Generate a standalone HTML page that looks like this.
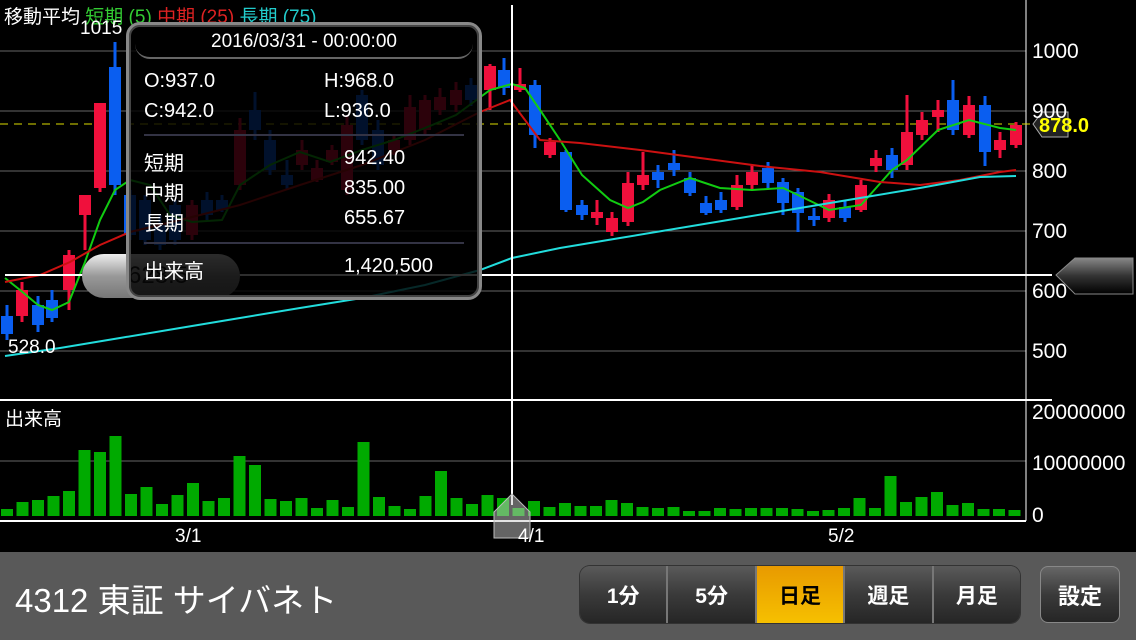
<!DOCTYPE html>
<html><head><meta charset="utf-8"><style>
body{margin:0;width:1136px;height:640px;background:#000;overflow:hidden;font-family:"Liberation Sans","Noto Sans CJK JP",sans-serif;position:relative}
.t{position:absolute;color:#fff;white-space:nowrap}
.bar{position:absolute;left:0;top:552px;width:1136px;height:88px;background:#595959}
.grp{position:absolute;left:580px;top:566px;width:440px;height:57px;border-radius:10px;background:linear-gradient(#5a5a5a,#3a3a3a 50%,#262626);display:flex;overflow:hidden;box-shadow:0 0 0 1px #333}
.grp div{flex:1;display:flex;align-items:center;justify-content:center;color:#fff;font-weight:bold;font-size:21px;border-left:2px solid #777}
.grp div:first-child{border-left:none}
.grp .on{background:linear-gradient(#e89a00,#f6c000);color:#000}
.set{position:absolute;left:1040px;top:566px;width:80px;height:57px;border-radius:8px;background:linear-gradient(#666,#3a3a3a 50%,#262626);border:1px solid #888;box-sizing:border-box;color:#fff;font-weight:bold;font-size:22px;display:flex;align-items:center;justify-content:center}
.ax{position:absolute;left:1032px;color:#fff;font-size:21px}
</style></head><body>
<svg id="s" width="1136" height="552" style="position:absolute;left:0;top:0"></svg>
<div class="t" style="left:4px;top:2px;font-size:19px">移動平均 <span style="color:#3c3">短期 (5)</span> <span style="color:#d22">中期 (25)</span> <span style="color:#2cc">長期 (75)</span></div>
<div class="t" style="left:80px;top:18px;font-size:19px">1015</div>
<div class="t" style="left:8px;top:337px;font-size:19px">528.0</div>
<div class="t" style="left:5px;top:404px;font-size:19px">出来高</div>
<div class="ax" style="top:40px">1000</div>
<div class="ax" style="top:100px">900</div>
<div class="ax" style="top:160px">800</div>
<div class="ax" style="top:220px">700</div>
<div class="ax" style="top:280px">600</div>
<div class="ax" style="top:340px">500</div>
<div class="ax" style="top:401px">20000000</div>
<div class="ax" style="top:452px">10000000</div>
<div class="ax" style="top:504px">0</div>
<div class="t" style="left:175px;top:526px;font-size:19px">3/1</div>
<div class="t" style="left:518px;top:526px;font-size:19px">4/1</div>
<div class="t" style="left:828px;top:526px;font-size:19px">5/2</div>
<div style="position:absolute;left:82px;top:254px;width:158px;height:44px;border-radius:22px;background:linear-gradient(#eee,#999 50%,#777);"></div>
<div class="t" style="left:128px;top:262px;font-size:24px;color:#222">628.5</div>
<div style="position:absolute;left:126px;top:22px;width:356px;height:278px;border-radius:14px;background:rgba(0,0,0,0.82);border:3px solid #888;box-sizing:border-box;box-shadow:inset 0 0 0 2px #444"></div>
<div style="position:absolute;left:135px;top:29px;width:338px;height:30px;border-radius:15px;background:#000;border-bottom:2px solid #666;box-sizing:border-box"></div>
<div class="t" style="left:135px;top:31px;width:338px;text-align:center;font-size:19px">2016/03/31 - 00:00:00</div>
<div class="t" style="left:144px;top:70px;font-size:20px">O:937.0</div>
<div class="t" style="left:324px;top:70px;font-size:20px">H:968.0</div>
<div class="t" style="left:144px;top:100px;font-size:20px">C:942.0</div>
<div class="t" style="left:324px;top:100px;font-size:20px">L:936.0</div>
<div style="position:absolute;left:144px;top:134px;width:320px;height:2px;background:#334"></div>
<div class="t" style="left:144px;top:147px;font-size:20px">短期</div><div class="t" style="left:344px;top:147px;font-size:20px">942.40</div>
<div class="t" style="left:144px;top:177px;font-size:20px">中期</div><div class="t" style="left:344px;top:177px;font-size:20px">835.00</div>
<div class="t" style="left:144px;top:207px;font-size:20px">長期</div><div class="t" style="left:344px;top:207px;font-size:20px">655.67</div>
<div style="position:absolute;left:144px;top:242px;width:320px;height:2px;background:#334"></div>
<div class="t" style="left:144px;top:255px;font-size:20px">出来高</div><div class="t" style="left:344px;top:255px;font-size:20px">1,420,500</div>
<div class="bar"></div>
<div class="t" style="left:15px;top:574px;font-size:33px">4312 東証 サイバネト</div>
<div class="grp"><div>1分</div><div>5分</div><div class="on">日足</div><div>週足</div><div>月足</div></div>
<div class="set">設定</div>
<script>
var s=document.getElementById('s'),h='';
[51,111,171,231,291,351,461].forEach(function(y){h+='<line x1="0" x2="1026" y1="'+y+'" y2="'+y+'" stroke="#666" stroke-width="1"/>';});
h+='<line x1="0" x2="1052" y1="400" y2="400" stroke="#fff" stroke-width="2"/><line x1="0" x2="1026" y1="521" y2="521" stroke="#fff" stroke-width="2"/><line x1="1026" x2="1026" y1="0" y2="521" stroke="#fff"/>';
h+='<line x1="0" x2="1030" y1="124" y2="124" stroke="#dd0" stroke-dasharray="8,6"/>';
var vt=[509,502,500,496,491,450,452,436,494,487,504,495,483,501,498,456,465,499,501,498,508,500,507,442,497,506,509,496,471,498,504,495,498,508,501,507,503,506,506,500,503,507,508,507,511,511,508,509,508,508,508,509,511,510,508,498,508,476,502,497,492,505,503,509,509,510];
for(var i=0;i<vt.length;i++){var x=1+i*15.5;if(x>1014)break;h+='<rect x="'+x.toFixed(1)+'" y="'+vt[i]+'" width="12" height="'+(516-vt[i])+'" fill="#0a0"/>';}
var c=[[7,316,334,305,340,'b'],[22,290,316,282,322,'r'],[38,305,325,296,332,'b'],[52,300,318,290,322,'b'],[69,255,290,250,310,'r'],[85,195,215,195,250,'r'],[100,103,188,103,192,'r'],[115,67,185,42,195,'b'],[130,195,235,190,240,'b'],[145,200,240,195,245,'b'],[160,225,245,215,250,'b'],[175,205,240,200,245,'b'],[192,205,235,200,240,'r'],[207,200,215,192,220,'b'],[222,200,210,195,212,'b'],[240,130,185,118,190,'r'],[255,110,130,92,140,'b'],[270,140,170,130,175,'b'],[287,175,185,160,190,'b'],[302,150,165,140,170,'r'],[317,168,180,160,182,'r'],[332,150,162,145,165,'r'],[347,125,190,115,195,'r'],[362,95,140,90,145,'b'],[378,130,165,120,170,'b'],[394,140,150,135,155,'r'],[410,107,140,95,145,'r'],[425,100,130,95,135,'r'],[440,97,110,88,115,'r'],[456,90,105,82,112,'r'],[471,85,100,78,106,'b'],[490,66,90,64,110,'r'],[504,70,88,58,95,'b'],[520,84,90,68,92,'r'],[535,85,135,80,148,'b'],[550,142,155,138,158,'r'],[566,152,210,150,212,'b'],[582,205,215,200,220,'b'],[597,212,218,200,225,'r'],[612,218,232,212,236,'r'],[628,183,222,172,226,'r'],[643,175,185,152,190,'r'],[658,172,180,165,188,'b'],[674,163,170,150,176,'b'],[690,178,193,172,196,'b'],[706,203,213,196,215,'b'],[721,200,210,192,213,'b'],[737,185,207,175,210,'r'],[752,172,185,165,190,'r'],[768,168,183,162,188,'b'],[783,182,203,178,215,'b'],[798,192,213,188,232,'b'],[814,216,220,208,226,'b'],[829,200,218,194,222,'r'],[845,207,218,200,222,'b'],[861,185,210,180,212,'r'],[876,158,166,150,172,'r'],[892,155,170,148,178,'b'],[907,132,165,95,170,'r'],[922,120,135,112,140,'r'],[938,110,117,100,132,'r'],[953,100,130,80,135,'b'],[969,105,135,96,138,'r'],[985,105,152,96,166,'b'],[1000,140,150,132,158,'r'],[1016,125,145,122,148,'r']];
c.forEach(function(k){var col=k[5]=='r'?'#f0103c':'#0a5ef0';h+='<line x1="'+k[0]+'" x2="'+k[0]+'" y1="'+k[3]+'" y2="'+k[4]+'" stroke="'+col+'" stroke-width="3"/><rect x="'+(k[0]-6)+'" y="'+k[1]+'" width="12" height="'+Math.max(3,k[2]-k[1])+'" fill="'+col+'"/>';});
h+='<polyline fill="none" stroke="#1c1" stroke-width="2" points="5,278 20,290 38,305 52,310 69,302 85,262 100,220 115,190 130,180 150,185 170,215 192,222 222,220 240,185 270,165 300,152 330,162 362,150 394,140 425,128 456,115 490,90 512,84 525,88 540,110 560,140 582,175 610,200 628,208 643,202 660,190 690,178 720,188 752,190 783,188 798,195 829,210 861,205 892,170 907,160 938,130 969,120 1000,128 1016,130"/>';
h+='<polyline fill="none" stroke="#c11" stroke-width="2" points="5,282 40,275 70,262 100,245 130,232 180,220 240,205 300,185 362,165 425,140 480,112 510,100 540,140 580,143 640,150 700,158 760,166 820,172 880,182 920,185 960,180 1000,172 1016,170"/>';
h+='<polyline fill="none" stroke="#2dd" stroke-width="2" points="5,356 60,348 120,338 180,328 240,318 300,308 362,298 425,285 480,270 512,258 560,248 620,238 680,228 740,218 800,208 860,198 920,188 980,177 1016,176"/>';
h+='<line x1="512" x2="512" y1="5" y2="505" stroke="#fff" stroke-width="2"/><line x1="5" x2="1052" y1="275" y2="275" stroke="#fff" stroke-width="2"/>';
h+='<path d="M1033,124 L1042,112 L1068,112 L1068,137 L1042,137 Z" fill="#222" stroke="#aaa"/><text x="1039" y="132" fill="#ff0" font-size="20" font-weight="bold" font-family="Liberation Sans">878.0</text>';
h+='<defs><linearGradient id="g" x1="0" y1="0" x2="0" y2="1"><stop offset="0" stop-color="#888"/><stop offset=".5" stop-color="#333"/><stop offset="1" stop-color="#000"/></linearGradient></defs>';
h+='<path d="M1056,275 L1075,258 L1133,258 L1133,294 L1075,294 Z" fill="url(#g)" stroke="#888"/>';
h+='<path d="M512,494 L530,512 L530,538 L494,538 L494,512 Z" fill="rgba(200,200,200,0.5)" stroke="#bbb"/>';
s.innerHTML=h;
</script>
</body></html>
